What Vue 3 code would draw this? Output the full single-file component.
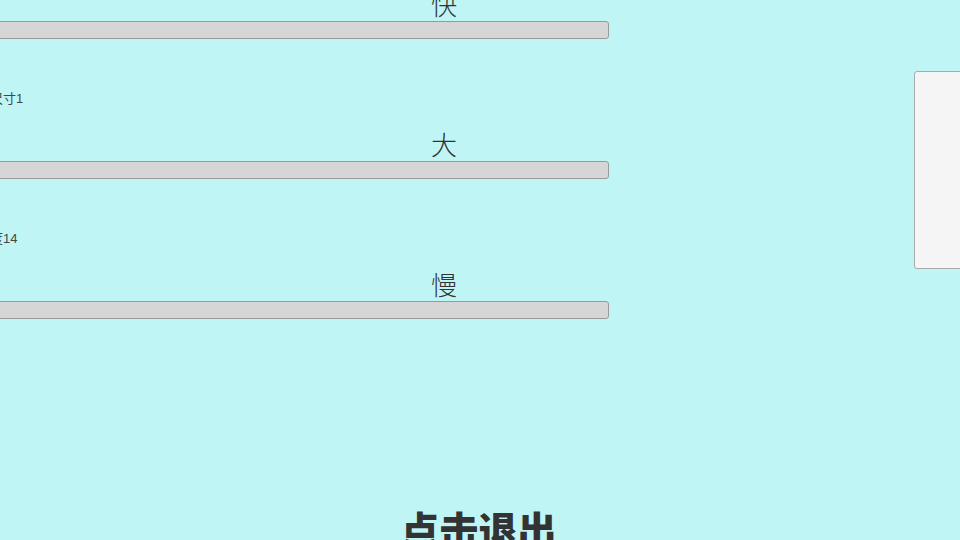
<script setup>
const rows = [
  { hint: '', mark: '快' },
  { hint: '点尺寸1', mark: '大' },
  { hint: '速度14', mark: '慢' }
]
</script>

<template>
  <div class="page">
    <div class="settings">
      <section v-for="row in rows" :key="row.mark" class="setting">
        <p class="hint">{{ row.hint }}</p>
        <div class="mark">{{ row.mark }}</div>
        <div class="bar"></div>
      </section>
    </div>
    <div class="exit">点击退出</div>
    <aside class="side-panel"></aside>
  </div>
</template>

<style scoped>
.page {
  position: relative;
  width: 960px;
  height: 540px;
  overflow: hidden;
  background-color: #bff6f5;
  color: #333;
  font-family: 'Liberation Sans', 'Noto Sans CJK SC', sans-serif;
}
.settings {
  width: 660px;
  margin-top: -101px;
  margin-left: -51px;
}
.setting {
  height: 140px;
  display: flex;
  flex-direction: column;
  justify-content: flex-end;
  align-items: stretch;
}
.hint {
  margin: 0 0 24px 28px;
  height: 16px;
  font-size: 13px;
  line-height: 16px;
  color: #444;
}
.mark {
  height: 30px;
  padding-left: 482px;
  font-size: 26px;
  font-weight: 300;
  line-height: 30px;
}
.bar {
  box-sizing: border-box;
  height: 18px;
  border: 1px solid #999;
  border-radius: 3px;
  background-color: #d6d6d6;
}
.exit {
  margin-top: 184px;
  margin-left: -3px;
  text-align: center;
  font-family: 'Noto Sans CJK SC', sans-serif;
  font-size: 39px;
  font-weight: 900;
  line-height: 50px;
}
.side-panel {
  position: absolute;
  top: 71px;
  left: 914px;
  width: 80px;
  height: 198px;
  box-sizing: border-box;
  border: 1px solid #aaa;
  border-radius: 3px;
  background-color: #f5f5f5;
}
</style>
